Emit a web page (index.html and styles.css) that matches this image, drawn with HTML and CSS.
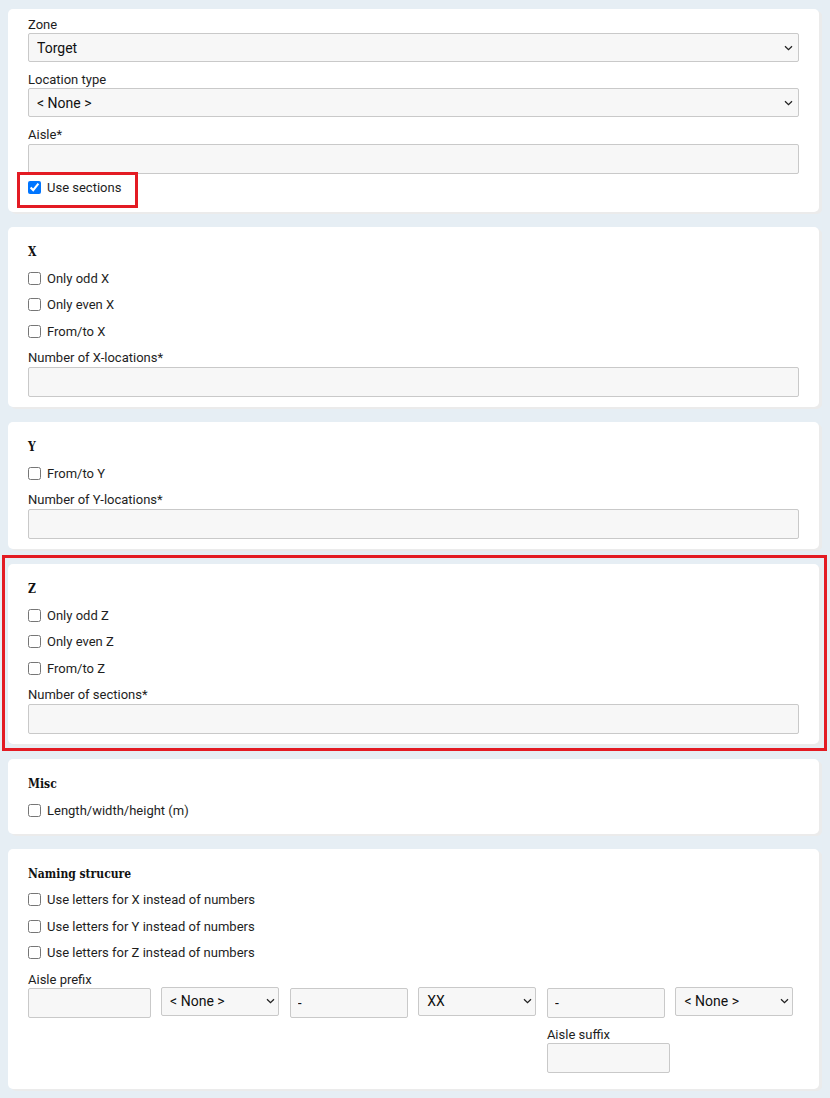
FILE: index.html
```html
<!DOCTYPE html>
<html lang="en">
<head>
    <meta charset="UTF-8">
    <meta name="viewport" content="width=device-width, initial-scale=1.0">
    <title>Create locations</title>
    <link rel="stylesheet" href="styles.css">
</head>
<body>
    <div class="card card-top">
        <div class="field">
            <label for="zone">Zone</label>
            <select id="zone" class="control"><option>Torget</option></select>
        </div>
        <div class="field">
            <label for="locationType">Location type</label>
            <select id="locationType" class="control"><option>&lt; None &gt;</option></select>
        </div>
        <div class="field">
            <label for="aisle">Aisle*</label>
            <input type="text" id="aisle" class="control">
        </div>
        <div class="check-row first-check">
            <input type="checkbox" id="useSections" checked>
            <label for="useSections">Use sections</label>
            <span class="mark"></span>
        </div>
    </div>

    <div class="card">
        <h4 class="section-title">X</h4>
        <div class="checks">
            <div class="check-row"><input type="checkbox" id="oddX"><label for="oddX">Only odd X</label></div>
            <div class="check-row"><input type="checkbox" id="evenX"><label for="evenX">Only even X</label></div>
            <div class="check-row"><input type="checkbox" id="fromToX"><label for="fromToX">From/to X</label></div>
        </div>
        <div class="field after-checks">
            <label for="countX">Number of X-locations*</label>
            <input type="text" id="countX" class="control">
        </div>
    </div>

    <div class="card">
        <h4 class="section-title">Y</h4>
        <div class="checks">
            <div class="check-row"><input type="checkbox" id="fromToY"><label for="fromToY">From/to Y</label></div>
        </div>
        <div class="field after-checks">
            <label for="countY">Number of Y-locations*</label>
            <input type="text" id="countY" class="control">
        </div>
    </div>

    <div class="card flagged">
        <h4 class="section-title">Z</h4>
        <div class="checks">
            <div class="check-row"><input type="checkbox" id="oddZ"><label for="oddZ">Only odd Z</label></div>
            <div class="check-row"><input type="checkbox" id="evenZ"><label for="evenZ">Only even Z</label></div>
            <div class="check-row"><input type="checkbox" id="fromToZ"><label for="fromToZ">From/to Z</label></div>
        </div>
        <div class="field after-checks">
            <label for="countZ">Number of sections*</label>
            <input type="text" id="countZ" class="control">
        </div>
    </div>

    <div class="card card-misc">
        <h4 class="section-title">Misc</h4>
        <div class="checks">
            <div class="check-row"><input type="checkbox" id="dimensions"><label for="dimensions">Length/width/height (m)</label></div>
        </div>
    </div>

    <div class="card card-naming">
        <h4 class="section-title">Naming strucure</h4>
        <div class="checks">
            <div class="check-row"><input type="checkbox" id="lettersX"><label for="lettersX">Use letters for X instead of numbers</label></div>
            <div class="check-row"><input type="checkbox" id="lettersY"><label for="lettersY">Use letters for Y instead of numbers</label></div>
            <div class="check-row"><input type="checkbox" id="lettersZ"><label for="lettersZ">Use letters for Z instead of numbers</label></div>
        </div>
        <div class="naming-grid">
            <label for="prefix" class="prefix-label">Aisle prefix</label>
            <input type="text" id="prefix" class="control part">
            <select class="control part"><option>&lt; None &gt;</option></select>
            <input type="text" class="control part" value="-">
            <select class="control part"><option>XX</option></select>
            <input type="text" class="control part" value="-">
            <select class="control part"><option>&lt; None &gt;</option></select>
            <label for="suffix" class="suffix-label">Aisle suffix</label>
            <input type="text" id="suffix" class="control suffix-input">
        </div>
    </div>
</body>
</html>
```

FILE: styles.css
```css
body {
    font-family: Roboto, "Liberation Sans", Arial, sans-serif;
    font-size: 13px;
    color: #1e1e1e;
    background-color: #e6eef4;
    margin: 0;
    padding: 9px 11px 10px 8px;
}
.card {
    position: relative;
    background-color: #fff;
    border-radius: 5px;
    box-shadow: 3px 2px 0 0 #ebebeb;
    padding: 16px 20px 10px 20px;
    margin-bottom: 15px;
}
.card-top {
    padding-top: 7px;
    padding-bottom: 12px;
}
.card-misc {
    padding-bottom: 10px;
}
.card-naming {
    padding-bottom: 16px;
    margin-bottom: 0;
}
.section-title {
    font-family: "DejaVu Serif Condensed", "DejaVu Serif", serif;
    font-weight: bold;
    font-size: 12px;
    line-height: 18px;
    margin: 0;
    color: #111;
}
.field {
    display: flex;
    flex-direction: column;
}
.field + .field {
    margin-top: 9px;
}
.field label,
.naming-grid label {
    line-height: 17px;
}
.control {
    box-sizing: border-box;
    font-family: Roboto, "Liberation Sans", Arial, sans-serif;
    font-size: 14px;
    color: #111;
    background-color: #f7f7f7;
    border: 1px solid #c9c9c9;
    border-radius: 2px;
    margin: 0;
}
input.control {
    height: 30px;
    padding: 0 7px;
    margin-top: 1px;
}
select.control {
    appearance: none;
    -webkit-appearance: none;
    height: 29px;
    padding: 0 22px 0 8px;
    background-image: url("data:image/svg+xml,%3Csvg xmlns='http://www.w3.org/2000/svg' width='9' height='6' viewBox='0 0 9 6'%3E%3Cpath d='M1 1.2l3.5 3.4 3.5-3.4' fill='none' stroke='%23222' stroke-width='1.3'/%3E%3C/svg%3E");
    background-repeat: no-repeat;
    background-position: right 5px center;
    background-size: 9px 6px;
}
.checks {
    margin-top: 4px;
}
.check-row {
    display: flex;
    align-items: center;
    height: 26.5px;
}
.check-row input {
    width: 13px;
    height: 13px;
    margin: 0 6px 0 0;
}
.first-check {
    position: relative;
    height: 26px;
}
.mark {
    position: absolute;
    left: -11px;
    top: -2px;
    width: 121px;
    height: 36px;
    box-sizing: border-box;
    border: 3px solid #e31b23;
}
.flagged::after {
    content: "";
    position: absolute;
    top: -9px;
    left: -6px;
    right: -8px;
    bottom: -7px;
    border: 3px solid #e31b23;
    pointer-events: none;
}
.after-checks {
    margin-top: 4.5px;
}
.naming-grid {
    display: grid;
    grid-template-columns: 122.5px repeat(5, 118px);
    column-gap: 10.6px;
    align-items: start;
    margin-top: 4.5px;
}
.prefix-label {
    grid-column: 1;
    grid-row: 1;
}
.naming-grid .part {
    grid-row: 2;
    width: 100%;
}
.naming-grid input.control {
    margin-top: 0;
}
.naming-grid select.control {
    margin-top: -1px;
    background-position: right 3px center;
}
.suffix-label {
    grid-column: 5;
    grid-row: 3;
    margin-top: 8px;
}
.naming-grid .suffix-input {
    grid-column: 5;
    grid-row: 4;
    width: 123.5px;
}
```
